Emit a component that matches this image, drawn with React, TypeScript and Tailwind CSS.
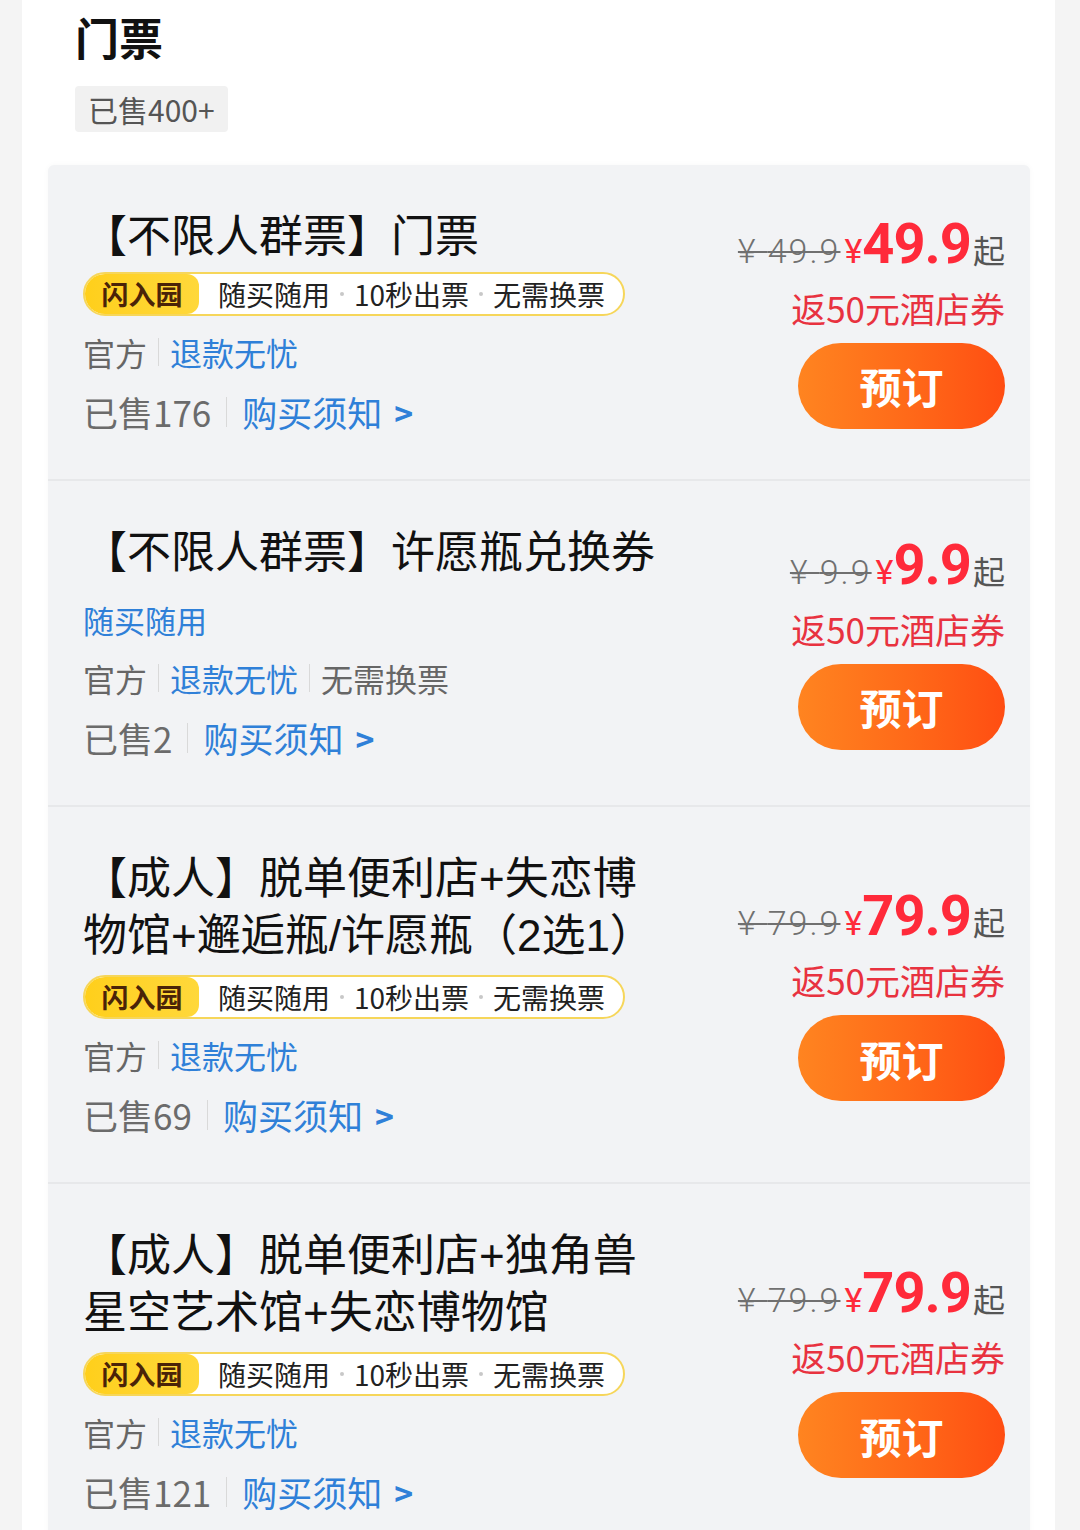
import React from "react";

interface Ticket {
  id: string;
  title: string[];
  flash: boolean;
  blueTag?: string;
  extra?: string;
  sold: string;
  orig: string;
  price: string;
}

const tickets: Ticket[] = [
  { id: "a", title: ["【不限人群票】门票"], flash: true, sold: "176", orig: "49.9", price: "49.9" },
  {
    id: "b",
    title: ["【不限人群票】许愿瓶兑换券"],
    flash: false,
    blueTag: "随买随用",
    extra: "无需换票",
    sold: "2",
    orig: "9.9",
    price: "9.9",
  },
  {
    id: "c",
    title: ["【成人】脱单便利店+失恋博", "物馆+邂逅瓶/许愿瓶（2选1）"],
    flash: true,
    sold: "69",
    orig: "79.9",
    price: "79.9",
  },
  {
    id: "d",
    title: ["【成人】脱单便利店+独角兽", "星空艺术馆+失恋博物馆"],
    flash: true,
    sold: "121",
    orig: "79.9",
    price: "79.9",
  },
];

function FlashBadge({ wide }: { wide: boolean }) {
  return (
    <div
      className={
        wide
          ? "mt-[11px] flex h-[44px] w-[542px] items-stretch overflow-hidden rounded-full border-2 border-[#f6d65a] bg-white"
          : "mt-[7px] flex h-[44px] w-[542px] items-stretch overflow-hidden rounded-full border-2 border-[#f6d65a] bg-white"
      }
    >
      <div className="flex w-[114px] items-center justify-center rounded-r-[12px] bg-linear-to-r from-[#ffcf1a] to-[#ffd83a] text-[27px] font-bold text-[#4a2308]">
        闪入园
      </div>
      <div className="flex items-center pl-[19px] text-[28px] text-[#222]">
        <span>随买随用</span>
        <span className="mx-[10px] h-[4px] w-[4px] rounded-full bg-[#c8c8c8]" />
        <span>10秒出票</span>
        <span className="mx-[10px] h-[4px] w-[4px] rounded-full bg-[#c8c8c8]" />
        <span>无需换票</span>
      </div>
    </div>
  );
}

function Divider() {
  return <span className="mx-[11px] h-[28px] w-px bg-[#d9d9d9]" />;
}

function TicketCard({ t, last }: { t: Ticket; last: boolean }) {
  const twoLines = t.title.length > 1;
  return (
    <div
      className={
        last
          ? "flex items-center justify-between pt-[40px] pb-[42px] pl-[35px] pr-[25px]"
          : "flex items-center justify-between border-b-2 border-[#e7e8ea] pt-[40px] pb-[42px] pl-[35px] pr-[25px]"
      }
    >
      <div className="flex flex-col">
        <div className="mt-[3px] whitespace-nowrap font-['Liberation_Sans','Noto_Sans_CJK_SC',sans-serif] text-[44px] leading-[57px] text-[#111]">
          {t.title.map((line, i) => (
            <React.Fragment key={line}>
              {i > 0 && <br />}
              {line}
            </React.Fragment>
          ))}
        </div>
        {t.flash && <FlashBadge wide={twoLines} />}
        {t.blueTag && (
          <div className="mt-[14px] text-[31px] leading-[50px] text-[#2f80d8]">{t.blueTag}</div>
        )}
        <div className={t.flash ? "mt-[11px] flex h-[50px] items-center text-[32px]" : "mt-[8px] flex h-[50px] items-center text-[32px]"}>
          <span className="text-[#666]">官方</span>
          <Divider />
          <span className="text-[#2f80d8]">退款无忧</span>
          {t.extra && (
            <>
              <Divider />
              <span className="text-[#666]">{t.extra}</span>
            </>
          )}
        </div>
        <div className="mt-[10px] flex h-[50px] items-center text-[35px]">
          <span className="text-[#6b6b6b]">已售{t.sold}</span>
          <span className="mx-[15px] h-[30px] w-px bg-[#d9d9d9]" />
          <span className="text-[#2f80d8]">购买须知</span>
          <span className="ml-[12px] text-[32px] font-semibold text-[#2f80d8]">&gt;</span>
        </div>
      </div>

      <div className="flex flex-col items-end">
        <div className="flex h-[60px] items-baseline">
          <span className="font-['Roboto','Noto_Sans_CJK_SC',sans-serif] text-[34px] font-light tracking-[2px] text-[#707070] line-through decoration-[#707070] decoration-2">
            ¥ {t.orig}
          </span>
          <span className="ml-[4px] font-['Roboto','Noto_Sans_CJK_SC',sans-serif] text-[34px] text-[#ff2a3a]">¥</span>
          <span className="font-['Roboto','Noto_Sans_CJK_SC',sans-serif] text-[56px] leading-[60px] font-bold tracking-[-1px] text-[#ff2a3a]">
            {t.price}
          </span>
          <span className="ml-[2px] text-[32px] text-[#555]">起</span>
        </div>
        <div className="mt-[14px] text-[35px] leading-[40px] text-[#e8323f]">返50元酒店券</div>
        <button className="mt-[15px] flex h-[86px] w-[207px] items-center justify-center rounded-full bg-linear-to-r from-[#ff8420] to-[#ff4d12] text-[42px] font-bold text-white">
          预订
        </button>
      </div>
    </div>
  );
}

export default function App() {
  return (
    <div className="h-[1530px] w-[1080px] overflow-hidden bg-[#f4f4f4] font-['Noto_Sans_CJK_SC','Noto_Sans',sans-serif]">
      <div className="ml-[22px] h-full w-[1033px] bg-white pt-[6px]">
        <div className="pl-[53px]">
          <h1 className="text-[44px] leading-[62px] font-bold text-[#111]">门票</h1>
          <div className="mt-[18px] inline-flex h-[46px] items-center rounded-[4px] bg-[#f1f1f1] px-[13px] text-[30px] text-[#555]">
            已售400+
          </div>
        </div>
        <div className="mt-[33px] ml-[26px] w-[982px] rounded-t-[6px] bg-[#f2f3f5] shadow-[0_0_6px_rgba(0,0,0,0.03)]">
          {tickets.map((t, i) => (
            <TicketCard key={t.id} t={t} last={i === tickets.length - 1} />
          ))}
        </div>
      </div>
    </div>
  );
}
